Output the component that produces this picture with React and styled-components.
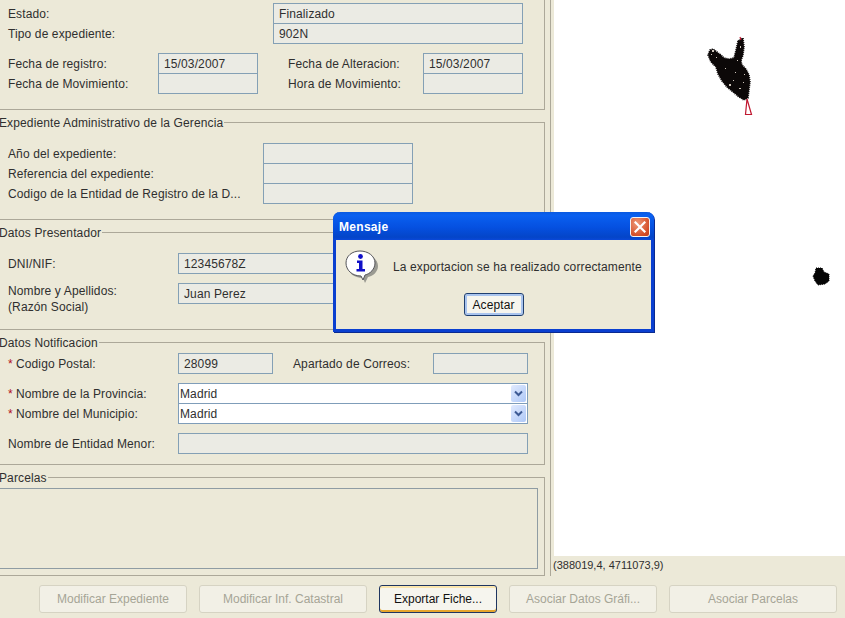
import React from 'react';
import styled, { createGlobalStyle } from 'styled-components';

const GlobalStyle = createGlobalStyle`
  html, body {
    margin: 0;
    padding: 0;
    height: 100%;
    overflow: hidden;
    background: #ece9d8;
  }
  body {
    font-family: "Liberation Sans", Arial, sans-serif;
    font-size: 12px;
    color: #2f2f2f;
    letter-spacing: 0.12px;
  }
`;

const Page = styled.div`
  position: relative;
  width: 845px;
  height: 618px;
  overflow: hidden;
  background: #ece9d8;
`;

const TopArea = styled.div`
  display: flex;
  height: 576px;
`;

const FormPanel = styled.div`
  width: 551px;
  flex: none;
  box-sizing: border-box;
  border-right: 1px solid #aca899;
  display: flex;
  flex-direction: column;
  gap: 12px;
`;

const Section = styled.section`
  position: relative;
  box-sizing: border-box;
  height: ${(p) => p.$h}px;
  margin: 0 5px 0 -4px;
  padding: ${(p) => p.$top}px 0 0 11px;
  border: 1px solid #aca899;
  border-top: ${(p) => (p.$open ? 'none' : '1px solid #aca899')};
`;

const Legend = styled.div`
  position: absolute;
  top: -7px;
  left: 2px;
  padding-right: 1px;
  line-height: 15px;
  background: #ece9d8;
`;

const Row = styled.div`
  display: flex;
  align-items: center;
  height: 20px;
  margin-top: ${(p) => p.$gap || 0}px;
`;

const Label = styled.div`
  flex: none;
  box-sizing: border-box;
  width: ${(p) => p.$w}px;
  margin-left: ${(p) => p.$left || 0}px;
  padding-top: ${(p) => (p.$flush ? 0 : 2)}px;
  align-self: ${(p) => (p.$flush ? 'flex-start' : 'auto')};
  line-height: 16px;
  white-space: nowrap;
`;

const Required = styled.span`
  color: #b01020;
  display: inline-block;
  width: 8px;
`;

const Field = styled.div`
  flex: none;
  box-sizing: border-box;
  width: ${(p) => p.$w}px;
  height: 21px;
  margin-top: 1px;
  padding-left: 5px;
  line-height: 21px;
  background: #ebebe4;
  border: 1px solid #84a0b5;
`;

const Combo = styled.div`
  flex: none;
  display: flex;
  align-items: center;
  box-sizing: border-box;
  width: 350px;
  height: 21px;
  margin-top: 1px;
  padding: 0 1px;
  background: #fff;
  border: 1px solid #7f9db9;
`;

const ComboText = styled.span`
  flex: 1;
`;

const ComboArrow = styled.div`
  width: 15px;
  height: 17px;
  display: flex;
  align-items: center;
  justify-content: center;
  border-radius: 2px;
  background: linear-gradient(135deg, #e1eafe, #aec8f7);
`;

const EmptyList = styled.div`
  box-sizing: border-box;
  height: 81px;
  margin-left: -11px;
  margin-right: 6px;
  background: #ece9d8;
  border: 1px solid #8f9ca3;
`;

const Splitter = styled.div`
  width: 3px;
  flex: none;
`;

const MapPane = styled.div`
  flex: 1;
  display: flex;
  flex-direction: column;
  min-width: 0;
`;

const MapCanvas = styled.svg`
  display: block;
  width: 291px;
  height: 556px;
  background: #fff;
`;

const StatusBar = styled.div`
  height: 17px;
  line-height: 18px;
  font-size: 11px;
  letter-spacing: 0;
  margin-left: -1px;
`;

const ButtonBar = styled.div`
  display: flex;
  gap: 12px;
  height: 42px;
  padding: 9px 8px 0 39px;
  box-sizing: border-box;
  letter-spacing: 0;
`;

const BarButton = styled.div`
  box-sizing: border-box;
  width: ${(p) => p.$w}px;
  height: 28px;
  line-height: 26px;
  text-align: center;
  border-radius: 3px;
  color: ${(p) => (p.$focus ? '#111' : '#a6a596')};
  background: ${(p) => (p.$focus ? '#f6f5ee' : '#f2f0e6')};
  border: 1px solid ${(p) => (p.$focus ? '#1f3560' : '#d6d3c3')};
  box-shadow: ${(p) => (p.$focus ? 'inset 0 2px #fbe6ad, inset 0 -2px #e6a52c' : 'none')};
`;

const Dialog = styled.div`
  position: absolute;
  left: 333px;
  top: 212px;
  width: 321px;
  height: 120px;
  box-sizing: border-box;
  display: flex;
  flex-direction: column;
  border: 3px solid #0a3fd0;
  border-top: none;
  border-radius: 7px 7px 0 0;
  background: #ece9d8;
  box-shadow: 1px 1px 0 #0a2a90;
`;

const TitleBar = styled.div`
  display: flex;
  align-items: center;
  justify-content: space-between;
  height: 28px;
  margin: 0 -3px;
  padding: 2px 4px 0 6px;
  box-sizing: border-box;
  border-radius: 7px 7px 0 0;
  background: linear-gradient(#0a5ae0, #0a60f0 12%, #0550e0 55%, #0445c8 90%, #0a48d8);
`;

const TitleText = styled.span`
  color: #fff;
  font-weight: bold;
  font-size: 12px;
  letter-spacing: 0.3px;
`;

const CloseButton = styled.div`
  width: 20px;
  height: 20px;
  box-sizing: border-box;
  display: flex;
  align-items: center;
  justify-content: center;
  border: 1px solid #f4f4f4;
  border-radius: 3px;
  background: radial-gradient(circle at 35% 30%, #ee9a78, #d5502a 70%, #c23c18);
`;

const DialogBody = styled.div`
  flex: 1;
  display: flex;
  flex-direction: column;
  align-items: center;
`;

const MessageRow = styled.div`
  display: flex;
  align-self: stretch;
  height: 53px;
  padding: 9px 0 0 9px;
  box-sizing: border-box;
  gap: 14px;
`;

const MessageText = styled.div`
  margin-top: 10px;
  line-height: 16px;
  white-space: nowrap;
`;

const AcceptButton = styled.div`
  box-sizing: border-box;
  width: 60px;
  height: 23px;
  line-height: 22px;
  text-align: center;
  color: #111;
  border-radius: 3px;
  background: #f6f5ee;
  border: 1px solid #1f3f70;
  box-shadow: inset 0 0 0 2px #a9c4ee;
`;

function Chevron() {
  return (
    <svg width="9" height="7" viewBox="0 0 9 7">
      <path d="M1 1.5 L4.5 5 L8 1.5" fill="none" stroke="#3d5a94" strokeWidth="2" />
    </svg>
  );
}

function InfoIcon() {
  return (
    <svg width="34" height="34" viewBox="0 0 34 34">
      <path d="M17 5 C26 5 33 10 33 17 C33 23 28 27 23 28 L20 34 L18 29 C9 29 3 24 3 17 C3 10 9 5 17 5 Z" fill="#9a9a92" />
      <path d="M15 2 C23 2 30 7 30 14 C30 20 25 25 20 26 L18 31 L16 27 C7 27 1 21 1 14 C1 7 7 2 15 2 Z" fill="#fff" stroke="#55555a" strokeWidth="1" />
      <circle cx="15.5" cy="7.5" r="2.4" fill="#1010c8" />
      <path d="M12 11.5 H17.5 V20 H20 V22.5 H11.5 V20 H14 V14 H12 Z" fill="#1010c8" />
    </svg>
  );
}

function CloseGlyph() {
  return (
    <svg width="12" height="12" viewBox="0 0 12 12">
      <path d="M1.5 1.5 L10.5 10.5 M10.5 1.5 L1.5 10.5" stroke="#fff" strokeWidth="2.2" strokeLinecap="square" />
    </svg>
  );
}

// the two loaded layers on the map, in page coordinates (pane starts at x=554)
function MapDrawing() {
  return (
    <MapCanvas viewBox="554 0 291 556">
      <path
        d="M738 41 L743 38 L744 47 L743 55 L741 61 L742 65 L746 69 L749 75 L750 82 L749 90 L748 98 L744 100 L739 97 L733 92 L727 87 L722 81 L718 74 L716 67 L711 62 L708 55 L710 50 L713 49 L717 52 L721 55 L724 58 L729 59 L734 58 L736 50 Z"
        fill="#0c0808"
        stroke="#0c0808"
        strokeWidth="1.6"
        strokeDasharray="1 1"
      />
      <path d="M712 50h2v2h-2z M711 54h1v1h-1z M716 57h1v1h-1z M729 84h2v2h-2z M739 88h2v1h-2z M743 82h1v1h-1z M740 46h1v2h-1z M725 68h1v1h-1z M735 72h1v1h-1z M733 80h1v1h-1z M744 74h1v1h-1z M737 60h1v1h-1z" fill="#cfc6bc" />
      <path d="M747 99 L745.5 114.5 L751.5 114.5 Z" fill="#fff" stroke="#c01830" strokeWidth="1.2" />
      <path d="M740 37 L741 40" stroke="#c01830" strokeWidth="1.2" />
      <path
        d="M816 268 L822 268 L824 272 L829 274 L829 281 L825 284 L818 285 L815 281 L813 276 L815 273 Z"
        fill="#050505"
        stroke="#050505"
        strokeWidth="1"
        strokeDasharray="1 1"
      />
    </MapCanvas>
  );
}

export default function App() {
  return (
    <Page>
      <GlobalStyle />
      <TopArea>
        <FormPanel>
          <Section $h={110} $top={3} $open>
            <Row>
              <Label $w={265}>Estado:</Label>
              <Field $w={250}>Finalizado</Field>
            </Row>
            <Row>
              <Label $w={265}>Tipo de expediente:</Label>
              <Field $w={250}>902N</Field>
            </Row>
            <Row $gap={10}>
              <Label $w={150}>Fecha de registro:</Label>
              <Field $w={100}>15/03/2007</Field>
              <Label $w={135} $left={30}>Fecha de Alteracion:</Label>
              <Field $w={100}>15/03/2007</Field>
            </Row>
            <Row>
              <Label $w={150}>Fecha de Movimiento:</Label>
              <Field $w={100} />
              <Label $w={135} $left={30}>Hora de Movimiento:</Label>
              <Field $w={100} />
            </Row>
          </Section>

          <Section $h={98} $top={20}>
            <Legend>Expediente Administrativo de la Gerencia</Legend>
            <Row>
              <Label $w={255}>Año del expediente:</Label>
              <Field $w={150} />
            </Row>
            <Row>
              <Label $w={255}>Referencia del expediente:</Label>
              <Field $w={150} />
            </Row>
            <Row>
              <Label $w={255}>Codigo de la Entidad de Registro de la D...</Label>
              <Field $w={150} />
            </Row>
          </Section>

          <Section $h={98} $top={20}>
            <Legend>Datos Presentador</Legend>
            <Row>
              <Label $w={170}>DNI/NIF:</Label>
              <Field $w={350}>12345678Z</Field>
            </Row>
            <Row $gap={10}>
              <Label $w={170} $flush>Nombre y Apellidos:<br />(Razón Social)</Label>
              <Field $w={350}>Juan Perez</Field>
            </Row>
          </Section>

          <Section $h={123} $top={10}>
            <Legend>Datos Notificacion</Legend>
            <Row>
              <Label $w={170}><Required>*</Required>Codigo Postal:</Label>
              <Field $w={95}>28099</Field>
              <Label $w={140} $left={20}>Apartado de Correos:</Label>
              <Field $w={95} />
            </Row>
            <Row $gap={10}>
              <Label $w={170}><Required>*</Required>Nombre de la Provincia:</Label>
              <Combo>
                <ComboText>Madrid</ComboText>
                <ComboArrow><Chevron /></ComboArrow>
              </Combo>
            </Row>
            <Row>
              <Label $w={170}><Required>*</Required>Nombre del Municipio:</Label>
              <Combo>
                <ComboText>Madrid</ComboText>
                <ComboArrow><Chevron /></ComboArrow>
              </Combo>
            </Row>
            <Row $gap={10}>
              <Label $w={170}>Nombre de Entidad Menor:</Label>
              <Field $w={350} />
            </Row>
          </Section>

          <Section $h={99} $top={10}>
            <Legend>Parcelas</Legend>
            <EmptyList />
          </Section>
        </FormPanel>
        <Splitter />
        <MapPane>
          <MapDrawing />
          <StatusBar>(388019,4, 4711073,9)</StatusBar>
        </MapPane>
      </TopArea>

      <ButtonBar>
        <BarButton $w={148}>Modificar Expediente</BarButton>
        <BarButton $w={168}>Modificar Inf. Catastral</BarButton>
        <BarButton $w={118} $focus>Exportar Fiche...</BarButton>
        <BarButton $w={148}>Asociar Datos Gráfi...</BarButton>
        <BarButton $w={168}>Asociar Parcelas</BarButton>
      </ButtonBar>

      <Dialog>
        <TitleBar>
          <TitleText>Mensaje</TitleText>
          <CloseButton><CloseGlyph /></CloseButton>
        </TitleBar>
        <DialogBody>
          <MessageRow>
            <InfoIcon />
            <MessageText>La exportacion se ha realizado correctamente</MessageText>
          </MessageRow>
          <AcceptButton>Aceptar</AcceptButton>
        </DialogBody>
      </Dialog>
    </Page>
  );
}
